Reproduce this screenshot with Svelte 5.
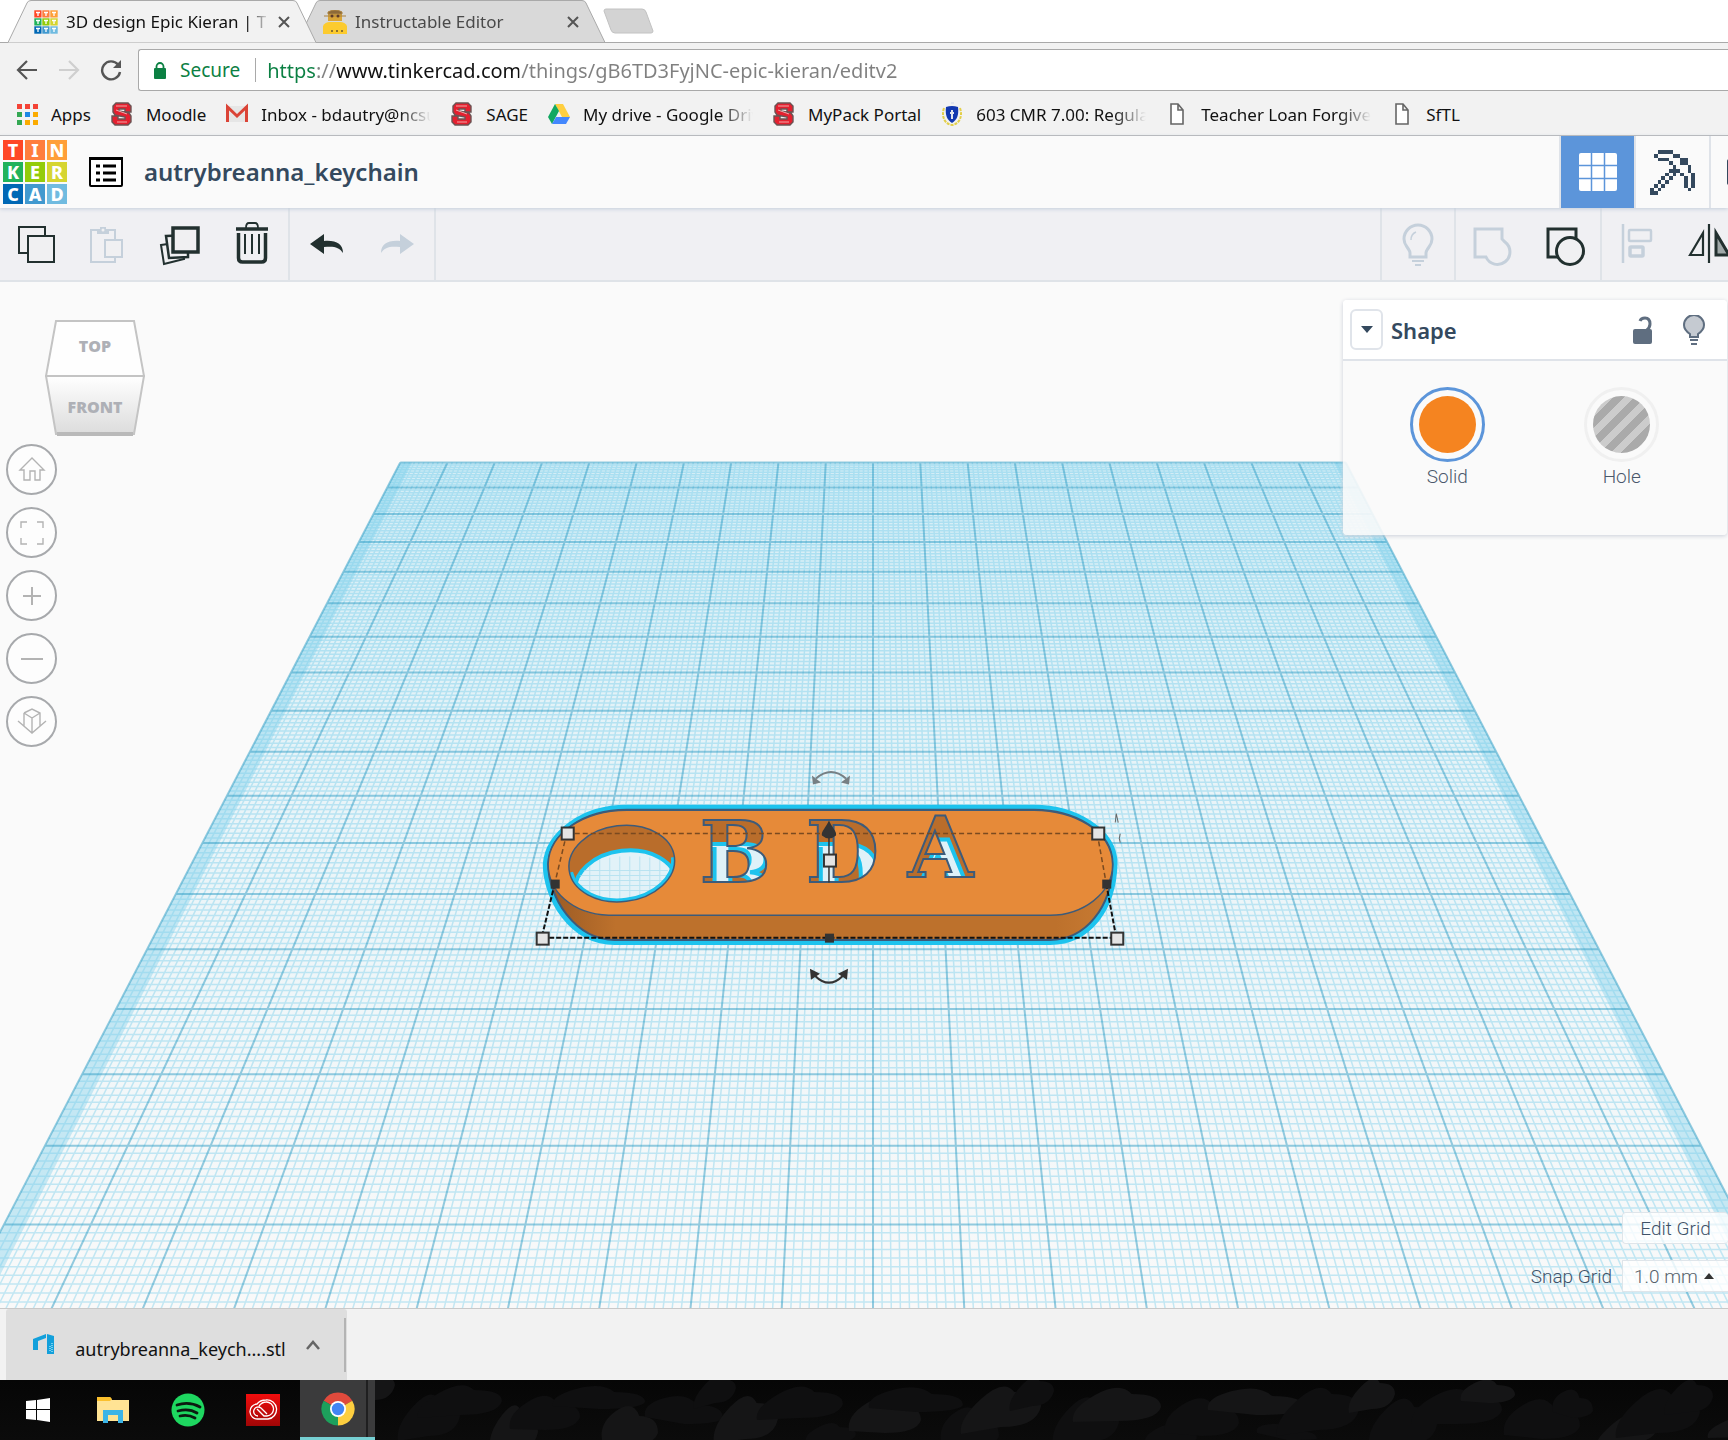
<!--
  App.svelte

  Browser window with the 3D editor open: tab strip, address bar,
  bookmarks, editor toolbars, workplane, download shelf and taskbar.
-->
<script lang="ts">
  type Bookmark = { label: string; icon: string };

  const bookmarks: Bookmark[] = [
    { label: "Apps", icon: "apps" },
    { label: "Moodle", icon: "block-s" },
    { label: "Inbox - bdautry@ncsu.edu", icon: "gmail" },
    { label: "SAGE", icon: "block-s" },
    { label: "My drive - Google Drive", icon: "drive" },
    { label: "MyPack Portal", icon: "block-s" },
    { label: "603 CMR 7.00: Regulations", icon: "crest" },
    { label: "Teacher Loan Forgiveness", icon: "doc" },
    { label: "SfTL", icon: "doc" },
  ];

  const logoTiles = [
    { letter: "T", color: "#ff4726" },
    { letter: "I", color: "#ff7e3d" },
    { letter: "N", color: "#ff9f38" },
    { letter: "K", color: "#21b35b" },
    { letter: "E", color: "#93cc0b" },
    { letter: "R", color: "#d6d530" },
    { letter: "C", color: "#0068b5" },
    { letter: "A", color: "#4199cf" },
    { letter: "D", color: "#70bbe0" },
  ];

  const appDots = [
    "#f44336", "#f44336", "#f44336",
    "#34a853", "#1e88e5", "#fbab00",
    "#34a853", "#fbab00", "#fbab00",
  ];

  const PICKAXE = [
    "..####......",
    ".#....##....",
    "..###...##..",
    ".....#..##..",
    "......#...#.",
    ".....###..#.",
    "....#.#.#..#",
    "...#.#...#.#",
    "..#.#....#.#",
    ".#.#.....#.#",
    "#.#.......#.",
    "##..........",
  ];

  // Workplane projection
  const HORIZON = -445;
  const CENTER = 873;
  const SLOPE = 0.052;
  const BACK = 0.001101;
  const DEPTH_STEP = 0.00002953;
  const FRONT_Y = 1330;

  function rowY(n: number) {
    return HORIZON + 1 / (BACK - DEPTH_STEP * n);
  }

  function planeX(column: number, y: number) {
    return CENTER + (y - HORIZON) * SLOPE * column;
  }

  function gridPath(step: number, major: boolean) {
    let d = "";
    for (let i = 0; i <= 20 / step; i++) {
      if (!major && i % 10 === 0) continue;
      const n = i * step;
      const y = rowY(n);
      if (y < FRONT_Y) {
        d += `M${planeX(-10, y).toFixed(1)} ${y.toFixed(1)}H${planeX(10, y).toFixed(1)}`;
      }
      const column = n - 10;
      d += `M${planeX(column, rowY(0)).toFixed(1)} ${rowY(0).toFixed(1)}`;
      d += `L${planeX(column, FRONT_Y).toFixed(1)} ${FRONT_Y}`;
    }
    return d;
  }

  function band(from: number, to: number) {
    const top = rowY(0);
    return [
      [planeX(from, top), top],
      [planeX(to, top), top],
      [planeX(to, FRONT_Y), FRONT_Y],
      [planeX(from, FRONT_Y), FRONT_Y],
    ]
      .map((p) => p.join(","))
      .join(" ");
  }

  const minorGrid = gridPath(0.1, false);
  const majorGrid = gridPath(1, true);

  const cornerHandles = [
    [568, 834],
    [1098, 834],
    [543, 939],
    [1117, 939],
    [830, 861],
  ];
  const edgeHandles = [
    [555, 884],
    [1106, 884],
    [829, 938],
  ];

  // Wallpaper rocks behind the taskbar
  const stones = Array.from({ length: 34 }, (_, i) => {
    const cx = i * 41 + ((i * 13) % 23);
    const cy = 12 + ((i * 29) % 46);
    const w = 20 + ((i * 11) % 29);
    const h = 8 + ((i * 7) % 11);
    const tilt = ((i * 17) % 15) - 7;
    return (
      `M${cx - w} ${cy + h - tilt}Q${cx - w - 3} ${cy - tilt} ${cx - w / 2} ${cy - h}` +
      `T${cx + w / 3} ${cy - h + tilt}Q${cx + w} ${cy - h + tilt} ${cx + w} ${cy + tilt}` +
      `Q${cx + w - 4} ${cy + h} ${cx} ${cy + h}Z`
    );
  });

  let url = $state("https://www.tinkercad.com/things/gB6TD3FyjNC-epic-kieran/editv2");
  let material = $state("solid");
  let snap = $state("1.0 mm");
</script>

{#snippet closeIcon()}
  <svg width="12" height="12" viewBox="0 0 12 12" fill="none" stroke="#555" stroke-width="2">
    <path d="M1 1 11 11M11 1 1 11" />
  </svg>
{/snippet}

{#snippet bookmarkIcon(name: string)}
  <svg class="bookmark-icon" viewBox="0 0 22 24">
    {#if name === "apps"}
      {#each appDots as color, i}
        <rect x={1 + (i % 3) * 8} y={2 + Math.floor(i / 3) * 8} width="5" height="5" fill={color} />
      {/each}
    {:else if name === "block-s"}
      <path
        d="M5 1h12l3 3v6h-6V7H8v2l10 2 2 3v6l-3 3H4l-3-3v-6h6v3h7v-2L4 13l-2-3V4z"
        fill="#e4202f" stroke="#6b5454" stroke-width="1.4"
      />
      <path d="M5 4h11M5 8l11 4M6 20h10" stroke="#f3a6a6" stroke-width="1" fill="none" />
    {:else if name === "gmail"}
      <rect x="1" y="4" width="20" height="16" fill="#e6e6e6" />
      <path d="M1.500 20V5l9.500 9L20.500 5v15" fill="none" stroke="#db4437" stroke-width="3" />
    {:else if name === "drive"}
      <path d="M7 2h8l7 13h-8z" fill="#ffcf40" />
      <path d="M7 2l4 7-7 13-4-7z" fill="#11a861" />
      <path d="M8 15h14l-4 7H4z" fill="#4387fd" />
    {:else if name === "crest"}
      <path d="M3 6c-3 9 1 16 8 17 7-1 11-8 8-17" fill="none" stroke="#e3cf4a" stroke-width="2" stroke-dasharray="3 1" />
      <path d="M5 5q6-2 12 0c1 8-1 13-6 16C6 18 4 13 5 5z" fill="#1238b0" />
      <path d="M11 8v9M9 11h4M10 1h3" stroke="#dfe3ee" stroke-width="2" />
    {:else}
      <path d="M5 2h7l5 6v14H5zM12 2v6h5" fill="#fff" stroke="#666" stroke-width="1.600" />
    {/if}
  </svg>
{/snippet}

<div class="window">
  <div class="tab-strip">
    <div class="tab active">
      <svg class="tab-shape" viewBox="0 0 308 43" preserveAspectRatio="none">
        <path d="M0 42.500 19 3q1-2.500 4-2.500h262q3 0 4 2.500l19 39.500" fill="#f2f2f2" stroke="#a9a9a9" />
      </svg>
      <svg class="favicon" viewBox="0 0 24 24">
        {#each logoTiles as tile, i}
          <rect x={(i % 3) * 8} y={Math.floor(i / 3) * 8} width="8" height="8" fill={tile.color} stroke="#f2f2f2" stroke-width="0.600" />
          <path d="M{(i % 3) * 8 + 2} {Math.floor(i / 3) * 8 + 2.500}h4M{(i % 3) * 8 + 4} {Math.floor(i / 3) * 8 + 2}v4" stroke="#fff" stroke-width="1.300" />
        {/each}
      </svg>
      <span class="tab-title">3D design Epic Kieran | Tinkercad</span>
      <button class="close" aria-label="Close tab">{@render closeIcon()}</button>
    </div>
    <div class="tab">
      <svg class="tab-shape" viewBox="0 0 308 43" preserveAspectRatio="none">
        <path d="M0 42.500 19 3q1-2.500 4-2.500h262q3 0 4 2.500l19 39.500z" fill="#d9d9d9" stroke="#a9a9a9" />
      </svg>
      <svg class="favicon" viewBox="0 0 24 24">
        <path d="M0 24v-8q2-4 7-4h10q5 0 7 4v8z" fill="#fccb2f" />
        <path d="M5 2q7-4 14 0v9H5z" fill="#d9a536" />
        <path d="M5 2q7-4 14 0v2H5zM1 6h22" fill="#8d6a38" stroke="#a98243" />
        <circle cx="9" cy="6" r="1.500" fill="#5c3a2a" />
        <circle cx="15" cy="6" r="1.500" fill="#5c3a2a" />
        <path d="M8 21h2M13 21h2M18 21h2" stroke="#8d7430" stroke-width="2" />
      </svg>
      <span class="tab-title muted">Instructable Editor</span>
      <button class="close" aria-label="Close tab">{@render closeIcon()}</button>
    </div>
    <button class="new-tab" aria-label="New tab">
      <svg width="52" height="27" viewBox="0 0 52 27">
        <path d="M3 1h36q3 0 4 3l7 19q0 2-2 2H12q-3 0-4-3L1 3q0-2 2-2z" fill="#d3d3d3" stroke="#c2c2c2" />
      </svg>
    </button>
  </div>

  <div class="address-row">
    <button class="nav" aria-label="Back">
      <svg width="22" height="22" viewBox="0 0 22 22" fill="none" stroke="#555" stroke-width="2.200">
        <path d="M21 11H3M11 2l-9 9 9 9" />
      </svg>
    </button>
    <button class="nav" aria-label="Forward">
      <svg width="22" height="22" viewBox="0 0 22 22" fill="none" stroke="#cfcfcf" stroke-width="2.200">
        <path d="M1 11h18M11 2l9 9-9 9" />
      </svg>
    </button>
    <button class="nav" aria-label="Reload">
      <svg width="22" height="22" viewBox="0 0 22 22" fill="none" stroke="#555" stroke-width="2.400">
        <path d="M18 5.500A9 9 0 1 0 20 13" />
        <path d="M21 1v8h-8z" fill="#555" stroke="none" />
      </svg>
    </button>
    <div class="omnibox">
      <svg width="12" height="17" viewBox="0 0 12 17">
        <path d="M2.500 8V4.500a3.500 3.500 0 0 1 7 0V8" fill="none" stroke="#0b8043" stroke-width="1.800" />
        <rect y="6" width="12" height="11" rx="1" fill="#0b8043" />
      </svg>
      <label class="secure" for="url">Secure</label>
      <input id="url" class="url" type="text" bind:value={url} spellcheck="false" />
    </div>
  </div>

  <nav class="bookmarks">
    {#each bookmarks as bookmark}
      <a href="#top" class="bookmark">
        {@render bookmarkIcon(bookmark.icon)}
        <span class="bookmark-label" class:fade={bookmark.label.length > 20}>{bookmark.label}</span>
      </a>
    {/each}
  </nav>

  <header class="editor-header">
    <a href="#top" class="logo" aria-label="Home">
      {#each logoTiles as tile}
        <span class="logo-tile" style:background={tile.color}>{tile.letter}</span>
      {/each}
    </a>
    <button class="menu" aria-label="Design list">
      <svg width="34" height="31" viewBox="0 0 34 31">
        <rect x="1" y="1" width="32" height="28" rx="1" fill="#fff" stroke="#000" stroke-width="2" />
        <path d="M0 1.500h34" stroke="#000" stroke-width="3" />
        <path d="M7 9h4M14 9h13M7 16h4M14 16h13M7 23h4M14 23h13" stroke="#000" stroke-width="3" />
      </svg>
    </button>
    <h1>autrybreanna_keychain</h1>
    <div class="modes">
      <button class="mode selected" aria-label="3D view">
        <svg width="38" height="38" viewBox="0 0 38 38">
          <rect width="38" height="38" rx="2" fill="#fff" />
          <path d="M12.500 0v38M25.500 0v38M0 12.500h38M0 25.500h38" stroke="#5c95da" stroke-width="1.500" />
        </svg>
      </button>
      <button class="mode" aria-label="Blocks view">
        <svg width="45" height="45" viewBox="0 0 12 12" fill="#34495e" shape-rendering="crispEdges">
          {#each PICKAXE as row, y}
            {#each row as cell, x}
              {#if cell === "#"}
                <rect {x} {y} width="1" height="1" />
              {/if}
            {/each}
          {/each}
        </svg>
      </button>
      <button class="mode" aria-label="Bricks view">
        <svg width="42" height="26" viewBox="0 0 42 26">
          <rect width="42" height="26" rx="2" fill="#34495e" />
        </svg>
      </button>
    </div>
  </header>

  <div class="toolbar">
    <div class="tools">
      <button class="tool" aria-label="Copy">
        <svg viewBox="0 0 48 48" fill="#f0f0f2" stroke="#22302f" stroke-width="2">
          <rect x="7" y="7" width="26" height="26" />
          <rect x="16" y="16" width="26" height="26" />
        </svg>
      </button>
      <button class="tool" aria-label="Paste" disabled>
        <svg viewBox="0 0 48 48" fill="none" stroke="#c5d0db" stroke-width="2">
          <rect x="7" y="10" width="24" height="32" />
          <rect x="21" y="20" width="17" height="17" fill="#f0f0f2" />
          <path d="M13 14v-4h3V7h6v3h3v4z" fill="#c5d0db" stroke="none" />
          <circle cx="19" cy="10" r="1.500" fill="#f0f0f2" stroke="none" />
        </svg>
      </button>
      <button class="tool" aria-label="Duplicate">
        <svg viewBox="0 0 48 48" fill="#f0f0f2" stroke="#22302f">
          <path d="m5 25 21-3 2 17-20 5z" stroke-width="2" />
          <path d="m10 16 22-1v22l-19 1z" stroke-width="2.500" />
          <rect x="17" y="8" width="25" height="24" stroke-width="3.500" />
        </svg>
      </button>
      <button class="tool" aria-label="Delete">
        <svg viewBox="0 0 48 48" fill="none" stroke="#22302f">
          <path d="M8 9h32" stroke-width="3.500" />
          <path d="M18 8q0-5 3-5h6q3 0 3 5" stroke-width="1.800" />
          <path d="M10.500 13v25q0 4 4 4h19q4 0 4-4V13" stroke-width="3.500" />
          <path d="M17 14v20M24 14v20M31 14v20" stroke-width="2" />
        </svg>
      </button>
    </div>
    <div class="tools">
      <button class="tool" aria-label="Undo">
        <svg viewBox="0 0 48 48" fill="#22302f">
          <path d="M8 24 22 14v7c12-1 19 3 19 12-4-6-9-7-19-6v7z" />
        </svg>
      </button>
      <button class="tool" aria-label="Redo" disabled>
        <svg viewBox="0 0 48 48" fill="#c5d0db">
          <path d="M40 24 26 14v7C14 20 7 24 7 33c4-6 9-7 19-6v7z" />
        </svg>
      </button>
    </div>
    <div class="tools end">
      <button class="tool" aria-label="Show all" disabled>
        <svg viewBox="0 0 48 48" fill="none" stroke="#c5d0db" stroke-width="3">
          <path d="M16 37v-4q0-2-3-6-3-4-3-8a14 14 0 0 1 28 0q0 4-3 8-3 4-3 6v4z" />
          <path d="M17 20q0-6 5-8" stroke-width="1.500" />
          <path d="M18 41h12M21 45h6" stroke-width="2" />
        </svg>
      </button>
    </div>
    <div class="tools">
      <button class="tool" aria-label="Group" disabled>
        <svg viewBox="0 0 48 48" fill="none" stroke="#c5d0db" stroke-width="3">
          <path d="M7 9h27v10l3 3a12.500 12.500 0 1 1-19 15H7z" />
        </svg>
      </button>
      <button class="tool" aria-label="Ungroup">
        <svg viewBox="0 0 48 48" fill="none" stroke="#22302f" stroke-width="3">
          <rect x="8" y="9" width="28" height="28" />
          <circle cx="30" cy="31" r="13.500" fill="#f0f0f2" />
        </svg>
      </button>
    </div>
    <div class="tools overflow">
      <button class="tool" aria-label="Align" disabled>
        <svg viewBox="0 0 48 48" fill="none" stroke="#c5d0db" stroke-width="2.500">
          <path d="M9 4v39" />
          <rect x="15" y="10" width="22" height="11" rx="1" />
          <rect x="16" y="27" width="13" height="9" rx="1" stroke-width="3.500" />
        </svg>
      </button>
      <button class="tool" aria-label="Mirror">
        <svg viewBox="0 0 48 48" fill="none" stroke="#22302f" stroke-width="2.200">
          <path d="M23 4v39M17 13v22H4z" />
          <path d="M30 13v22h13z" fill="#a0a9a9" stroke-width="3" />
        </svg>
      </button>
    </div>
  </div>

  <main class="scene">
    <svg class="canvas" viewBox="0 283 1728 1025" preserveAspectRatio="xMidYMin slice">
      <defs>
        <linearGradient id="plane" gradientUnits="userSpaceOnUse" x1="0" y1="462" x2="0" y2="1308">
          <stop offset="0" stop-color="#d3edf6" />
          <stop offset="0.400" stop-color="#e9f4f8" />
          <stop offset="1" stop-color="#f9f9f9" />
        </linearGradient>
        <linearGradient id="wall" x1="0" x2="1" y1="0" y2="0">
          <stop offset="0" stop-color="#9a5a24" />
          <stop offset="0.120" stop-color="#bd712c" />
          <stop offset="0.900" stop-color="#bd712c" />
          <stop offset="1" stop-color="#c87b33" />
        </linearGradient>
        <clipPath id="engraving-clip">
          <use href="#engraving" />
        </clipPath>
        <clipPath id="ring-clip">
          <ellipse cx="622" cy="864" rx="53" ry="38" transform="rotate(-7 622 864)" />
        </clipPath>
      </defs>

      <polygon points={band(-10, 10)} fill="url(#plane)" />
      <path d={minorGrid} stroke="#55c3e6" stroke-opacity="0.330" stroke-width="1.500" fill="none" />
      <polygon points={band(-10, -9.750)} fill="#7ed0ea" fill-opacity="0.400" />
      <polygon points={band(9.750, 10)} fill="#7ed0ea" fill-opacity="0.400" />
      <path d={majorGrid} stroke="#2d9cc3" stroke-opacity="0.500" stroke-width="2" fill="none" />

      <!-- Tag body: outline glow, side wall, top face -->
      <g transform="translate(520 751) scale(0.3954 0.3333)">
        <path
          class="hairline"
          d="M270 172H1300C1400 172 1503 240 1503 340C1500 470 1440 574 1340 574H240C130 574 66 440 66 340C72 250 160 172 270 172Z"
          fill="url(#wall)" stroke="#1dc3ee" stroke-width="6"
        />
        <path
          class="hairline"
          d="M270 178H1300C1400 178 1498 240 1498 340C1496 470 1430 568 1340 568H240C140 568 72 440 72 340C76 250 160 178 270 178Z"
          fill="url(#wall)" stroke="#3d5b7a" stroke-width="2"
        />
        <path
          class="hairline"
          d="M270 179H1300C1400 180 1496 240 1498 340C1500 430 1420 494 1340 494H225C130 490 72 420 72 340C74 250 160 180 270 179Z"
          fill="#e68a39" stroke="#3d5b7a" stroke-width="1.400"
        />
      </g>

      <!-- Key ring hole -->
      <ellipse cx="622" cy="864" rx="53" ry="38" transform="rotate(-7 622 864)" fill="#b96d2b" />
      <g clip-path="url(#ring-clip)">
        <ellipse cx="626" cy="887" rx="51" ry="36" transform="rotate(-7 626 887)" fill="#e2f2f8" stroke="#1dc3ee" stroke-width="4" />
        <path d="M584 871h84M580 876h92M580 881h92M580 886h92M580 891h92M590 866v34M600 860v40M610 858v42M620 857v43M630 857v43M640 857v43M650 858v42M660 860v40" stroke="#9fd9ec" stroke-opacity="0.600" />
        <ellipse cx="622" cy="864" rx="53" ry="38" transform="rotate(-7 622 864)" fill="none" stroke="#1dc3ee" stroke-width="7" stroke-dasharray="141 400" />
      </g>
      <ellipse cx="622" cy="864" rx="53" ry="38" transform="rotate(-7 622 864)" fill="none" stroke="#3d5b7a" stroke-width="1.500" />

      <!-- Cut-out initials: walls, floor seen through the cut, rim -->
      <g fill="#b96d2b">
        <text id="engraving" class="engraving">
          <tspan x="700" y="882">B</tspan><tspan x="806" y="882">D</tspan><tspan x="908" y="877">A</tspan>
        </text>
      </g>
      <g clip-path="url(#engraving-clip)">
        <use href="#engraving" x="3" y="24" fill="#dff1f8" stroke="#1dc3ee" stroke-width="4" />
      </g>
      <use href="#engraving" fill="none" stroke="#3d5b7a" stroke-width="2" />

      <!-- Selection box and handles -->
      <path d="M567 834H1097" stroke="#7a4a20" stroke-width="1.500" stroke-dasharray="5 3" />
      <path d="M567 834 555 884M1097 834l9 50" stroke="#7a4a20" stroke-width="1.500" stroke-dasharray="5 3" />
      <path d="M555 884 542 938H1116L1106 884" fill="none" stroke="#111" stroke-width="2" stroke-dasharray="5 2" />
      <path d="M829 838v45" stroke="#333" stroke-width="1.500" />
      <path d="M829 821c3 7 8 11 7 15q-7 6-14 0c-1-4 4-8 7-15z" fill="#333" />
      {#each edgeHandles as [x, y]}
        <rect x={x - 4} y={y - 4} width="9" height="9" fill="#333" />
      {/each}
      {#each cornerHandles as [x, y]}
        <rect x={x - 6} y={y - 6} width="12" height="12" fill="#e4e4e4" stroke="#333" stroke-width="2" />
      {/each}
      <g fill="none" stroke="#777f84" stroke-width="2">
        <path d="M816 779q15-13 30 0" />
        <path d="m812 776 1 9 8-2zM850 776l-1 9-8-2z" fill="#777f84" stroke="none" />
      </g>
      <g fill="none" stroke="#333" stroke-width="2">
        <path d="M815 976q14 14 28 0" />
        <path d="m810 969 10 5-9 6zM848 969l-10 5 9 6z" fill="#333" stroke="none" />
      </g>
      <path d="m1116 814-1 9M1116 814l2 9M1120 834l-1 5 1 4" stroke="#666" fill="none" />
    </svg>

    <svg class="view-cube" viewBox="0 0 100 118">
      <defs>
        <linearGradient id="cube-front" x1="0" x2="0" y1="0" y2="1">
          <stop offset="0" stop-color="#fff" />
          <stop offset="1" stop-color="#dcdcdc" />
        </linearGradient>
      </defs>
      <path d="M11 1h78l10 55H1z" fill="#fefefe" stroke="#c4c4c4" stroke-width="2" />
      <path d="M1 56h98l-10 58H11z" fill="url(#cube-front)" stroke="#c4c4c4" stroke-width="2" />
      <path d="M12 114h76" stroke="#b9b9b9" stroke-width="4" />
      <text x="50" y="32">TOP</text>
      <text x="50" y="93">FRONT</text>
    </svg>

    <div class="view-controls">
      <button class="round" aria-label="Home view">
        <svg viewBox="0 0 30 30"><path d="M3 15 15 3l12 12h-4v10h-5v-9h-5v9H7V15z" /></svg>
      </button>
      <button class="round" aria-label="Fit all in view">
        <svg viewBox="0 0 30 30"><path d="M4 10V4h6M20 4h6v6M26 20v6h-6M10 26H4v-6" /></svg>
      </button>
      <button class="round" aria-label="Zoom in">
        <svg viewBox="0 0 30 30"><path d="M6 15h18M15 6v18" stroke-width="2" /></svg>
      </button>
      <button class="round" aria-label="Zoom out">
        <svg viewBox="0 0 30 30"><path d="M4 15h22" stroke-width="2" /></svg>
      </button>
      <button class="round" aria-label="Switch projection">
        <svg viewBox="0 0 30 30"><path d="m7 6 8-4 8 4v13M7 6l8 5 8-5M7 6v13M15 11v15M1 14l14 12 14-12" /></svg>
      </button>
    </div>

    <section class="shape-panel">
      <div class="panel-head">
        <button class="collapse" aria-label="Collapse">
          <svg width="12" height="7" viewBox="0 0 12 7"><path d="M0 0h12L6 7z" fill="#34495e" /></svg>
        </button>
        <h2>Shape</h2>
        <button class="head-icon" aria-label="Lock">
          <svg width="20" height="28" viewBox="0 0 20 28">
            <path d="M7 5q1-3 5-3 5 0 5 6 0 4-4 7" fill="none" stroke="#5f6e80" stroke-width="3" />
            <rect y="13" width="19" height="15" rx="2" fill="#5f6e80" />
          </svg>
        </button>
        <button class="head-icon" aria-label="Hide">
          <svg width="22" height="30" viewBox="0 0 22 30">
            <path d="M7 22v-3q-6-4-6-9a10 10 0 0 1 20 0q0 5-6 9v3z" fill="#c5cad1" stroke="#5f6e80" stroke-width="2" />
            <path d="M7 25h8M8 29h6" stroke="#5f6e80" stroke-width="2" />
          </svg>
        </button>
      </div>
      <div class="panel-body">
        <label class="swatch">
          <input type="radio" name="material" value="solid" bind:group={material} />
          Solid
        </label>
        <label class="swatch hole">
          <input type="radio" name="material" value="hole" bind:group={material} />
          Hole
        </label>
      </div>
    </section>

    <div class="grid-controls">
      <button class="edit-grid">Edit Grid</button>
      <div class="snap">
        <label for="snap">Snap Grid</label>
        <div class="snap-box">
          <select id="snap" bind:value={snap}>
            <option>0.5 mm</option>
            <option>1.0 mm</option>
            <option>2.0 mm</option>
          </select>
          <svg class="caret" width="10" height="6" viewBox="0 0 10 6"><path d="M0 6h10L5 0z" fill="#333" /></svg>
        </div>
      </div>
    </div>
  </main>

  <div class="downloads">
    <button class="download">
      <svg width="22" height="22" viewBox="0 0 22 22" fill="#13a0db">
        <path d="M0 5 13 0v4L5 7v9H0zM14 0l7 2v18h-7z" />
        <path d="M17 12v5M19 9v9" stroke="#dff" stroke-dasharray="1 1" />
      </svg>
      <span class="file-name">autrybreanna_keych....stl</span>
      <svg width="14" height="10" viewBox="0 0 14 10" fill="none" stroke="#666" stroke-width="2.500">
        <path d="m1 9 6-7 6 7" />
      </svg>
    </button>
  </div>

  <div class="taskbar">
    <button class="app" aria-label="Start">
      <svg width="24" height="24" viewBox="0 0 24 24" fill="#fff">
        <path d="M0 3l10-1v9H0zM11 2l13-2v11H11zM0 12h10v10L0 21zM11 12h13v12l-13-2z" />
      </svg>
    </button>
    <button class="app" aria-label="File Explorer">
      <svg width="32" height="28" viewBox="0 0 32 28">
        <path d="M0 1h13l2 3h17v21H0z" fill="#ffe394" />
        <path d="M0 1h13l2 2-2 2H0z" fill="#fbc02d" />
        <path d="M6 27V14h20v13h-5v-8H11v8z" fill="#3cb4e7" />
      </svg>
    </button>
    <button class="app" aria-label="Spotify">
      <svg width="34" height="34" viewBox="0 0 34 34">
        <circle cx="17" cy="17" r="16.500" fill="#1ed760" />
        <path d="M6 12q12-4 23 2M7 18q11-3 19 2M9 23q8-2 15 2" fill="none" stroke="#0c1a10" stroke-width="2.800" stroke-linecap="round" />
      </svg>
    </button>
    <button class="app" aria-label="Creative Cloud">
      <svg width="34" height="32" viewBox="0 0 34 32">
        <defs>
          <linearGradient id="cloud" x1="0" x2="0" y1="0" y2="1">
            <stop offset="0" stop-color="#f20d0d" />
            <stop offset="1" stop-color="#a00606" />
          </linearGradient>
        </defs>
        <rect width="34" height="32" fill="url(#cloud)" />
        <g fill="none" stroke="#fff" stroke-width="1.300">
          <path d="M12 25a7.500 7.500 0 0 1-1-15q3-4 9-4a9.500 9.500 0 0 1 2 19z" />
          <path d="M12 22a4.500 4.500 0 1 1 3-8l6 6M13 12q3-4 7-4a7 7 0 0 1 1 14h-3l-7-7" />
        </g>
      </svg>
    </button>
    <button class="app running" aria-label="Chrome">
      <svg width="34" height="34" viewBox="0 0 34 34">
        <path d="M17 17 2.700 8.700a16.500 16.500 0 0 1 28.600 0z" fill="#e04a3c" />
        <path d="M17 17 31.300 8.700A16.500 16.500 0 0 1 17 33.500z" fill="#fdce3f" />
        <path d="M17 17v16.500A16.500 16.500 0 0 1 2.700 8.700z" fill="#1da05c" />
        <circle cx="17" cy="17" r="8" fill="#fff" />
        <circle cx="17" cy="17" r="6.200" fill="#4285f4" />
      </svg>
    </button>
    <svg class="stones" viewBox="0 0 1353 60" preserveAspectRatio="xMinYMin slice">
      {#each stones as d, i}
        <path {d} fill={i % 3 ? "#0f0f10" : "#151516"} />
      {/each}
    </svg>
  </div>
</div>

<style>
  :global(body) {
    margin: 0;
  }

  .window {
    display: flex;
    flex-direction: column;
    min-height: 100vh;
    overflow: hidden;
    background: #fafafa;
    font-family: "Noto Sans", "Open Sans", sans-serif;
    color: #111;
  }

  button {
    display: flex;
    align-items: center;
    justify-content: center;
    padding: 0;
    border: 0;
    background: none;
    color: inherit;
    font: inherit;
    cursor: pointer;
  }

  button:disabled {
    cursor: default;
  }

  /* Tabs */
  .tab-strip {
    display: flex;
    height: 42px;
    padding-left: 8px;
    border-bottom: 1px solid #a9a9a9;
    background: #fff;
  }

  .tab {
    position: relative;
    display: flex;
    align-items: center;
    box-sizing: border-box;
    width: 308px;
    height: 43px;
    margin-left: -19px;
    padding: 0 26px;
  }

  .tab.active {
    z-index: 1;
    margin-left: 0;
  }

  .tab-shape {
    position: absolute;
    inset: 0;
    width: 100%;
    height: 100%;
  }

  .favicon {
    position: relative;
    flex: none;
    width: 24px;
    height: 24px;
  }

  .tab-title {
    position: relative;
    flex: 1;
    overflow: hidden;
    margin: 0 12px 0 8px;
    font-size: 17px;
    white-space: nowrap;
    mask-image: linear-gradient(90deg, #000 180px, transparent 204px);
  }

  .tab-title.muted {
    color: #4a4a4a;
  }

  .close {
    position: relative;
  }

  .new-tab {
    align-self: center;
    margin-left: -2px;
  }

  /* Address bar */
  .address-row {
    display: flex;
    align-items: center;
    gap: 20px;
    padding: 6px 0 2px 16px;
    background: #f2f2f2;
  }

  .omnibox {
    display: flex;
    flex: 1;
    align-items: center;
    box-sizing: border-box;
    height: 42px;
    margin-left: -4px;
    padding-left: 15px;
    border: 1px solid #a9a9a9;
    border-right: 0;
    border-radius: 3px 0 0 3px;
    background: #fff;
    font-size: 19px;
  }

  .secure {
    margin: 0 11px 0 14px;
    padding-right: 15px;
    border-right: 1px solid #a9a9a9;
    color: #0b8043;
    line-height: 24px;
  }

  .url {
    flex: 1;
    min-width: 0;
    padding: 0;
    border: 0;
    outline: 0;
    background: linear-gradient(
      90deg,
      #0b8043 0 49px,
      #808080 49px 70px,
      #111 70px 252px,
      #808080 252px
    );
    background-clip: text;
    color: transparent;
    font: inherit;
    font-size: 20px;
  }

  /* Bookmarks */
  .bookmarks {
    display: flex;
    align-items: center;
    gap: 20px;
    height: 42px;
    padding: 0 16px;
    border-bottom: 1px solid #b4b4b4;
    background: #f2f2f2;
  }

  .bookmark {
    display: flex;
    align-items: center;
    gap: 13px;
    color: inherit;
    font-size: 17px;
    text-decoration: none;
  }

  .bookmark-icon {
    width: 22px;
    height: 24px;
  }

  .bookmark-label {
    overflow: hidden;
    max-width: 170px;
    white-space: nowrap;
  }

  .bookmark-label.fade {
    mask-image: linear-gradient(90deg, #000 138px, transparent 170px);
  }

  /* Editor header */
  .editor-header {
    position: relative;
    z-index: 1;
    display: flex;
    align-items: center;
    height: 72px;
    padding-left: 3px;
    background: #fafafa;
    box-shadow: 0 1px 4px #c3cddb;
  }

  .logo {
    display: grid;
    grid-template-columns: repeat(3, 20px);
    gap: 2px;
    text-decoration: none;
  }

  .logo-tile {
    color: #fff;
    font-size: 18px;
    font-weight: 800;
    line-height: 20px;
    text-align: center;
  }

  .menu {
    margin: 0 21px 0 22px;
  }

  h1 {
    margin: 0;
    color: #34495e;
    font-size: 24px;
    font-weight: 600;
    line-height: 28px;
  }

  .modes {
    display: flex;
    align-self: stretch;
    margin: 0 -56px 0 auto;
  }

  .mode {
    width: 75px;
    border-left: 2px solid #dfe3e9;
  }

  .mode.selected {
    background: #5c95da;
  }

  /* Toolbar */
  .toolbar {
    display: flex;
    border-bottom: 2px solid #dfe3e8;
    background: #f0f0f3;
  }

  .tools {
    display: flex;
    height: 72px;
    border-right: 2px solid #dfe3e8;
  }

  .tools.end {
    margin-left: auto;
    border-left: 2px solid #dfe3e8;
  }

  .tools.overflow {
    margin-right: -20px;
  }

  .tool {
    width: 72px;
  }

  .tool svg {
    width: 48px;
    height: 48px;
  }

  /* Scene */
  .scene {
    position: relative;
    flex: 1;
    min-height: 600px;
    overflow: hidden;
    font-family: Roboto, "Noto Sans", sans-serif;
    font-weight: 300;
  }

  .canvas {
    position: absolute;
    inset: 0;
    width: 100%;
    height: 100%;
  }

  .hairline {
    vector-effect: non-scaling-stroke;
  }

  .engraving {
    font-family: "DejaVu Serif", serif;
    font-size: 84px;
    font-weight: 700;
  }

  .view-cube {
    position: absolute;
    top: 38px;
    left: 45px;
    width: 100px;
    height: 118px;
    fill: #aeb0b6;
    font-family: "Open Sans", sans-serif;
    font-size: 16px;
    font-weight: 800;
    text-anchor: middle;
  }

  .view-controls {
    position: absolute;
    top: 162px;
    left: 6px;
    display: grid;
    gap: 12px;
  }

  .round {
    box-sizing: border-box;
    width: 51px;
    height: 51px;
    border: 2px solid #a7a9ac;
    border-radius: 50%;
    background: #fdfdfd;
  }

  .round svg {
    width: 30px;
    height: 30px;
    fill: none;
    stroke: #b3b3b3;
    stroke-width: 1.4;
  }

  .shape-panel {
    position: absolute;
    top: 18px;
    right: 1px;
    width: 384px;
    border-radius: 4px;
    background: rgba(250, 250, 250, 0.9);
    box-shadow: 0 1px 4px #c9ced8;
  }

  .panel-head {
    display: flex;
    align-items: center;
    height: 59px;
    padding: 0 22px 0 7px;
    border-bottom: 2px solid #dfe3e9;
    border-radius: 4px 4px 0 0;
    background: #fff;
  }

  .collapse {
    box-sizing: border-box;
    width: 33px;
    height: 41px;
    border: 2px solid #e0e4ea;
    border-radius: 6px;
  }

  h2 {
    flex: 1;
    margin: 0 0 0 8px;
    color: #34495e;
    font-family: "Noto Sans", sans-serif;
    font-size: 22px;
    font-weight: 600;
    line-height: 28px;
  }

  .head-icon + .head-icon {
    margin-left: 30px;
  }

  .panel-body {
    display: grid;
    grid-template-columns: 1fr 1fr;
    height: 148px;
    padding: 26px 18px 0 17px;
  }

  .swatch {
    display: flex;
    flex-direction: column;
    align-items: center;
    gap: 4px;
    color: #4a586b;
    font-size: 19px;
    line-height: 22px;
  }

  .swatch input {
    box-sizing: border-box;
    width: 75px;
    height: 75px;
    margin: 0;
    padding: 6px;
    border: 3px solid #f0f0f0;
    border-radius: 50%;
    appearance: none;
    background: #f58420 content-box;
  }

  .swatch input:checked {
    border-color: #5c95da;
  }

  .swatch.hole input {
    background: repeating-linear-gradient(135deg, #aaa 0 8px, #ccc 8px 15px) content-box;
  }

  .grid-controls {
    position: absolute;
    right: 0;
    bottom: 16px;
    display: grid;
    justify-items: end;
    gap: 16px;
    color: #3f5268;
    font-size: 19px;
  }

  .edit-grid,
  .snap-box {
    box-sizing: border-box;
    width: 106px;
    height: 32px;
    border: 1px solid #dfe5ea;
    border-right: 0;
    border-radius: 4px;
    background: rgba(255, 255, 255, 0.8);
  }

  .snap {
    display: flex;
    align-items: center;
    gap: 10px;
  }

  .snap-box {
    position: relative;
    border-radius: 0;
  }

  .snap select {
    width: 100%;
    height: 100%;
    padding: 0 0 0 11px;
    border: 0;
    appearance: none;
    background: none;
    color: #56616a;
    font: inherit;
  }

  .caret {
    position: absolute;
    top: 12px;
    right: 14px;
    pointer-events: none;
  }

  /* Download shelf */
  .downloads {
    display: flex;
    height: 71px;
    padding-left: 6px;
    border-top: 1px solid #c9c9c9;
    background: #f2f2f2;
  }

  .download {
    position: relative;
    gap: 20px;
    width: 341px;
    border-radius: 3px 3px 0 0;
    background: #dedede;
    font-size: 18px;
  }

  .file-name {
    padding-top: 8px;
  }

  .download::after {
    position: absolute;
    top: 9px;
    right: 1px;
    bottom: 8px;
    width: 2px;
    background: #b4b4b4;
    content: "";
  }

  /* Taskbar */
  .taskbar {
    display: flex;
    height: 60px;
    background: linear-gradient(#060606, #0b0b0b);
  }

  .app {
    flex: none;
    width: 75px;
  }

  .app.running {
    box-sizing: border-box;
    border-bottom: 3px solid #76cfd2;
    background: linear-gradient(90deg, #3b3b3c 0 66px, #1f1f20 66px 68px, #3b3b3c 68px);
  }

  .stones {
    flex: 1;
    min-width: 0;
    height: 60px;
  }
</style>
